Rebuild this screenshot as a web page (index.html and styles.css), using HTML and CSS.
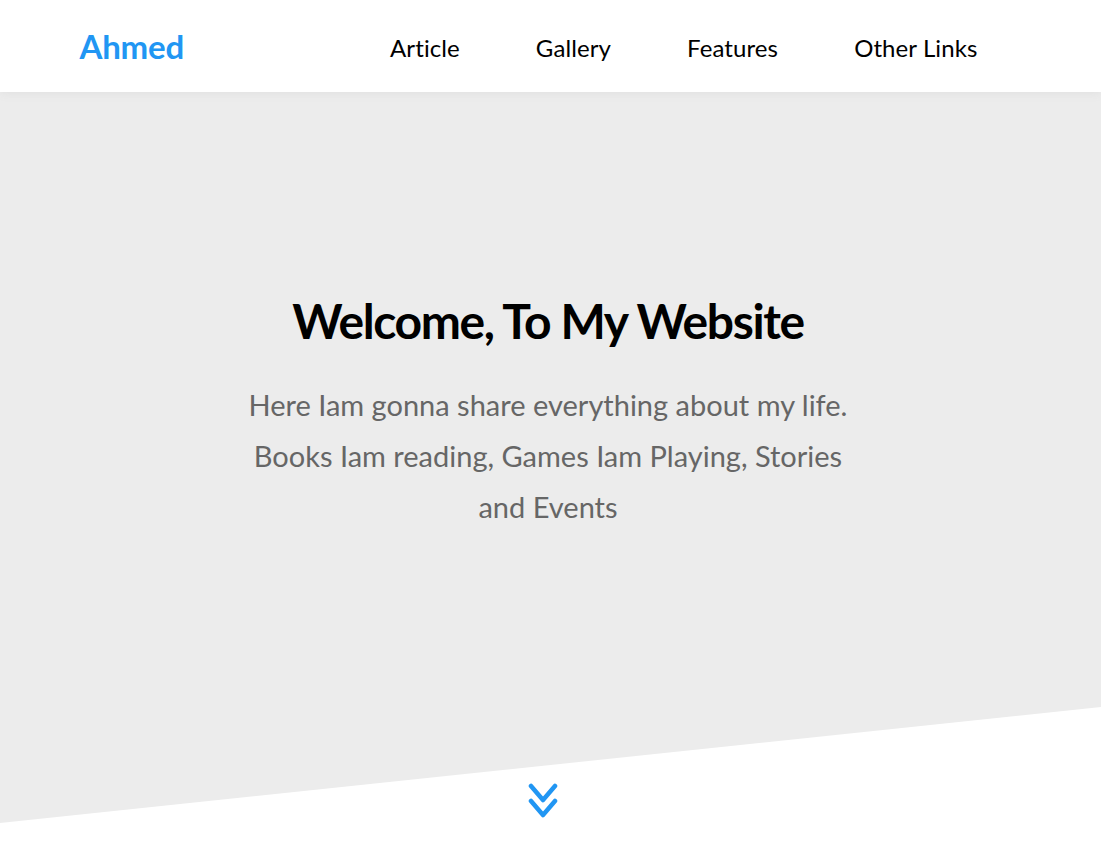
FILE: index.html
```html
<!DOCTYPE html>
<html lang="en">
<head>
<meta charset="utf-8">
<title>Ahmed</title>
<link rel="stylesheet" href="styles.css">
</head>
<body>
<header class="header">
  <div class="container header-inner">
    <a class="logo" href="#">Ahmed</a>
    <ul class="main-nav">
      <li><a href="#">Article</a></li>
      <li><a href="#">Gallery</a></li>
      <li><a href="#">Features</a></li>
      <li><a href="#">Other Links</a></li>
    </ul>
  </div>
</header>
<section class="landing">
  <div class="text">
    <h1>Welcome, To My Website</h1>
    <p>Here Iam gonna share everything about my life. Books Iam reading, Games Iam Playing, Stories and Events</p>
  </div>
  <a class="go-down" href="#">
    <svg width="30" height="36" viewBox="0 0 30 36" aria-hidden="true">
      <path d="M3 4 L15 18 L27 4" fill="none" stroke="#2196f3" stroke-width="4.5" stroke-linecap="round" stroke-linejoin="round"/>
      <path d="M3 19 L15 33 L27 19" fill="none" stroke="#2196f3" stroke-width="4.5" stroke-linecap="round" stroke-linejoin="round"/>
    </svg>
  </a>
</section>
</body>
</html>
```
FILE: styles.css
```css
* { box-sizing: border-box; }
body {
  margin: 0;
  font-family: "Lato", "Open Sans", sans-serif;
  background: #fff;
}
a { text-decoration: none; }
.container {
  width: 970px;
  margin: 0 auto;
  padding: 0 15px;
}
.header {
  position: relative;
  z-index: 2;
  background: #fff;
  box-shadow: 0 0 10px #ddd;
}
.header-inner {
  height: 92px;
  display: flex;
  align-items: center;
  justify-content: space-between;
}
.logo {
  color: #2196f3;
  font-size: 33px;
  font-weight: 700;
  letter-spacing: -0.2px;
  margin-left: -1px;
}
.main-nav {
  list-style: none;
  margin: 3px 5px 0 0;
  padding: 0;
  display: flex;
}
.main-nav a {
  display: block;
  padding: 0 38px;
  color: #000;
  font-size: 24px;
  letter-spacing: 0.1px;
}
.landing {
  position: relative;
  height: 766px;
  padding-top: 200px;
}
.landing::before {
  content: "";
  position: absolute;
  inset: 0;
  background: #ececec;
  clip-path: polygon(0 0, 100% 0, 100% 615px, 0 731px);
  z-index: -1;
}
.text {
  width: 640px;
  margin: 0 auto;
  padding-right: 5px;
  text-align: center;
}
.text h1 {
  margin: 0;
  font-size: 48px;
  font-weight: 700;
  color: #000;
  letter-spacing: -1.4px;
}
.text p {
  margin: 30px 0 0;
  font-size: 29px;
  line-height: 51px;
  color: #666;
}
.go-down {
  display: flex;
  justify-content: center;
  padding-right: 16px;
  margin-top: 250px;
}
```
